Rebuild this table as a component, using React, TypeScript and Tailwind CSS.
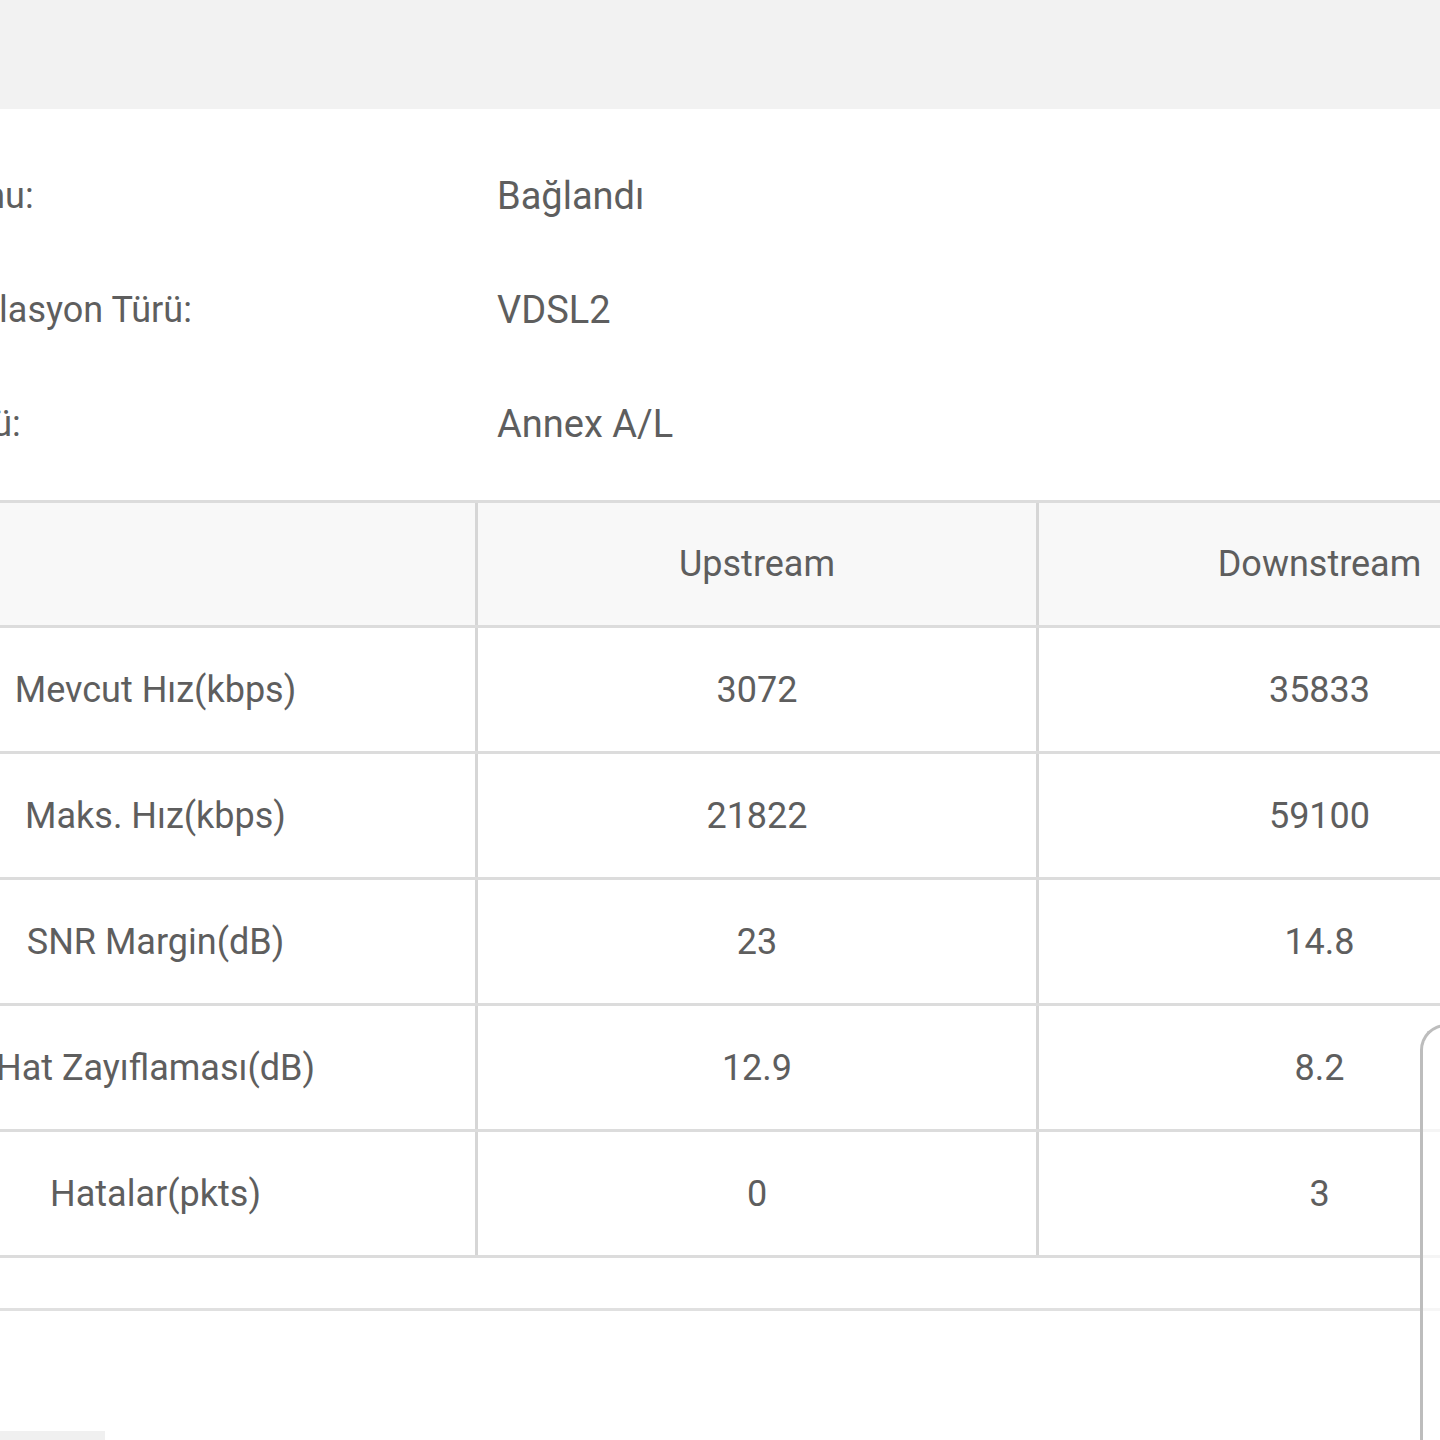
import React from "react";

const info = [
  { label: "Hat Durumu:", value: "Bağlandı", ml: "ml-[-168px]" },
  { label: "Modülasyon Türü:", value: "VDSL2", ml: "ml-[-93px]" },
  { label: "Annex Türü:", value: "Annex A/L", ml: "ml-[-168px]" },
];

const rows = [
  ["Mevcut Hız(kbps)", "3072", "35833"],
  ["Maks. Hız(kbps)", "21822", "59100"],
  ["SNR Margin(dB)", "23", "14.8"],
  ["Hat Zayıflaması(dB)", "12.9", "8.2"],
  ["Hatalar(pkts)", "0", "3"],
];

export default function App() {
  return (
    <div
      className="relative w-[1440px] h-[1440px] overflow-hidden bg-white text-[#5e5e5e]"
      style={{ fontFamily: "Roboto, 'Noto Sans', sans-serif" }}
    >
      <div className="h-[109px] bg-[#f2f2f2]" />

      <div className="pt-[30px] flex flex-col">
        {info.map((r) => (
          <div key={r.label} className="h-[114px] flex items-center leading-none">
            <div className="w-[497px] shrink-0 text-[36px]">
              <span className={`${r.ml} whitespace-nowrap inline-block`}>{r.label}</span>
            </div>
            <div className="whitespace-nowrap text-[38px]">{r.value}</div>
          </div>
        ))}
      </div>

      <div className="mt-[19px] ml-[-164px] w-[1764px] border-t-[3px] border-[#dcdcdc] text-[36px] leading-none">
        <div className="grid grid-cols-[642px_561px_561px] h-[125px] bg-[#f8f8f8] border-b-[3px] border-[#dcdcdc]">
          <div className="border-r-[3px] border-[#d6d6d6]" />
          <div className="flex items-center justify-center border-r-[3px] border-[#d6d6d6]">Upstream</div>
          <div className="flex items-center justify-center">Downstream</div>
        </div>
        {rows.map((r) => (
          <div
            key={r[0]}
            className="grid grid-cols-[642px_561px_561px] h-[126px] border-b-[3px] border-[#dcdcdc]"
          >
            <div className="flex items-center justify-center border-r-[3px] border-[#d6d6d6] whitespace-nowrap">{r[0]}</div>
            <div className="flex items-center justify-center border-r-[3px] border-[#d6d6d6]">{r[1]}</div>
            <div className="flex items-center justify-center">{r[2]}</div>
          </div>
        ))}
      </div>

      <div className="mt-[50px] border-t-[3px] border-[#e0e0e0]" />

      <div className="absolute left-0 bottom-0 w-[105px] h-[9px] bg-[#f0f0f0]" />

      <div className="absolute left-[1420px] top-[1024px] w-[60px] h-[500px] rounded-tl-[26px] border-l-[3px] border-t-[3px] border-[#bdbdbd] bg-white/70" />
    </div>
  );
}
